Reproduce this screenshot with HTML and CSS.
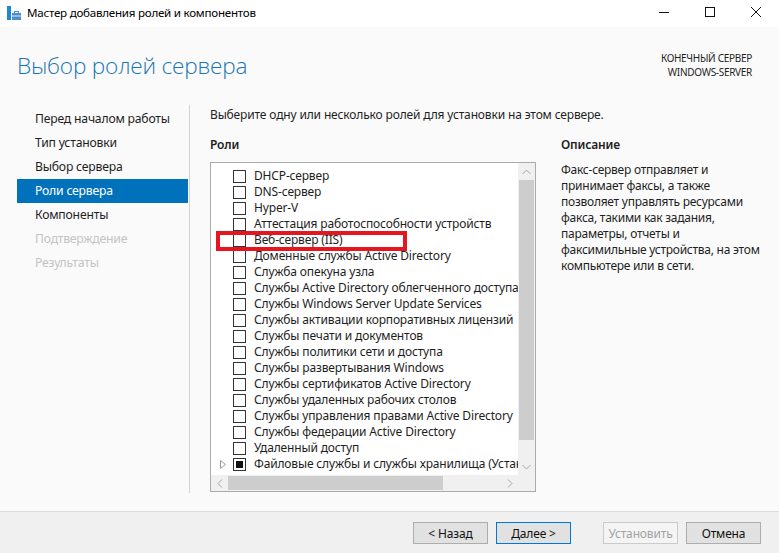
FILE: index.html
```html
<!DOCTYPE html>
<html lang="ru">
<head>
    <meta charset="UTF-8">
    <title>Мастер добавления ролей и компонентов</title>
    <link rel="stylesheet" href="styles.css">
</head>
<body>

    <div class="titlebar">
        <svg class="app-icon" width="16" height="16" viewBox="0 0 16 16">
            <rect x="1" y="1" width="4" height="3" fill="#1e88d6"/>
            <rect x="1" y="4" width="4" height="11" fill="#1e88d6"/>
            <rect x="6" y="8" width="9" height="7" fill="#4a8fc9"/>
            <rect x="8.5" y="6.5" width="4" height="2" fill="none" stroke="#4a8fc9" stroke-width="1"/>
            <rect x="6" y="10.5" width="9" height="1" fill="#d8e8f5"/>
        </svg>
        <span class="window-title">Мастер добавления ролей и компонентов</span>
        <div class="window-controls">
            <span class="ctl">
                <svg width="12" height="12" viewBox="0 0 12 12"><path d="M1 6.5h10" stroke="#111" stroke-width="1"/></svg>
            </span>
            <span class="ctl">
                <svg width="12" height="12" viewBox="0 0 12 12"><rect x="1.5" y="1.5" width="9" height="9" fill="none" stroke="#111" stroke-width="1"/></svg>
            </span>
            <span class="ctl">
                <svg width="12" height="12" viewBox="0 0 12 12"><path d="M1 1l10 10M11 1L1 11" stroke="#111" stroke-width="1"/></svg>
            </span>
        </div>
    </div>

    <div class="header">
        <h1>Выбор ролей сервера</h1>
        <div class="target-server">
            <div>КОНЕЧНЫЙ СЕРВЕР</div>
            <div>WINDOWS-SERVER</div>
        </div>
    </div>

    <div class="main">
        <div class="steps">
            <div class="step">Перед началом работы</div>
            <div class="step">Тип установки</div>
            <div class="step">Выбор сервера</div>
            <div class="step active">Роли сервера</div>
            <div class="step">Компоненты</div>
            <div class="step disabled">Подтверждение</div>
            <div class="step disabled">Результаты</div>
        </div>

        <div class="content">
            <p class="intro">Выберите одну или несколько ролей для установки на этом сервере.</p>
            <div class="columns">
                <div class="roles">
                    <div class="section-title">Роли</div>
                    <div class="listbox">
                        <div class="list">
                            <div class="row"><span class="exp"></span><span class="check"></span>DHCP-сервер</div>
                            <div class="row"><span class="exp"></span><span class="check"></span>DNS-сервер</div>
                            <div class="row"><span class="exp"></span><span class="check"></span>Hyper-V</div>
                            <div class="row"><span class="exp"></span><span class="check"></span>Аттестация работоспособности устройств</div>
                            <div class="row"><span class="exp"></span><span class="check"></span>Веб-сервер (IIS)</div>
                            <div class="row"><span class="exp"></span><span class="check"></span>Доменные службы Active Directory</div>
                            <div class="row"><span class="exp"></span><span class="check"></span>Служба опекуна узла</div>
                            <div class="row"><span class="exp"></span><span class="check"></span>Службы Active Directory облегченного доступа к каталогам</div>
                            <div class="row"><span class="exp"></span><span class="check"></span>Службы Windows Server Update Services</div>
                            <div class="row"><span class="exp"></span><span class="check"></span>Службы активации корпоративных лицензий</div>
                            <div class="row"><span class="exp"></span><span class="check"></span>Службы печати и документов</div>
                            <div class="row"><span class="exp"></span><span class="check"></span>Службы политики сети и доступа</div>
                            <div class="row"><span class="exp"></span><span class="check"></span>Службы развертывания Windows</div>
                            <div class="row"><span class="exp"></span><span class="check"></span>Службы сертификатов Active Directory</div>
                            <div class="row"><span class="exp"></span><span class="check"></span>Службы удаленных рабочих столов</div>
                            <div class="row"><span class="exp"></span><span class="check"></span>Службы управления правами Active Directory</div>
                            <div class="row"><span class="exp"></span><span class="check"></span>Службы федерации Active Directory</div>
                            <div class="row"><span class="exp"></span><span class="check"></span>Удаленный доступ</div>
                            <div class="row">
                                <span class="exp">
                                    <svg width="6" height="9" viewBox="0 0 6 9"><path d="M0.5 0.5v8l5-4z" fill="none" stroke="#9a9a9a" stroke-width="1"/></svg>
                                </span><span class="check partial"></span>Файловые службы и службы хранилища (Установлено 2 из 12)
                            </div>
                        </div>
                        <div class="vscroll">
                            <span class="arrow">
                                <svg width="9" height="6" viewBox="0 0 9 6"><path d="M0.5 5L4.5 1l4 4" fill="none" stroke="#a6a6a6" stroke-width="1"/></svg>
                            </span>
                            <div class="thumb"></div>
                            <span class="arrow">
                                <svg width="9" height="6" viewBox="0 0 9 6"><path d="M0.5 1l4 4 4-4" fill="none" stroke="#a6a6a6" stroke-width="1"/></svg>
                            </span>
                        </div>
                        <div class="hscroll">
                            <span class="arrow">
                                <svg width="6" height="9" viewBox="0 0 6 9"><path d="M5 0.5L1 4.5l4 4" fill="none" stroke="#a6a6a6" stroke-width="1"/></svg>
                            </span>
                            <div class="thumb"></div>
                            <span class="arrow">
                                <svg width="6" height="9" viewBox="0 0 6 9"><path d="M1 0.5l4 4-4 4" fill="none" stroke="#a6a6a6" stroke-width="1"/></svg>
                            </span>
                        </div>
                        <div class="corner"></div>
                        <!-- red frame around the IIS role -->
                        <div class="mark"></div>
                    </div>
                </div>
                <div class="description">
                    <div class="section-title">Описание</div>
                    <p>Факс-сервер отправляет и<br>принимает факсы, а также<br>позволяет управлять ресурсами<br>факса, такими как задания,<br>параметры, отчеты и<br>факсимильные устройства, на этом<br>компьютере или в сети.</p>
                </div>
            </div>
        </div>
    </div>

    <div class="footer">
        <button class="btn">&lt; Назад</button>
        <button class="btn default">Далее &gt;</button>
        <button class="btn wide-gap" disabled>Установить</button>
        <button class="btn">Отмена</button>
    </div>

</body>
</html>
```

FILE: styles.css
```css
html, body {
    margin: 0;
    padding: 0;
}

body {
    width: 779px;
    height: 553px;
    display: flex;
    flex-direction: column;
    font-family: "Noto Sans", "Open Sans", sans-serif;
    font-size: 12px;
    letter-spacing: -0.15px;
    color: #1e1e1e;
    background-color: #fafafa;
    overflow: hidden;
}

/* window caption */

.titlebar {
    height: 27px;
    display: flex;
    align-items: center;
    background-color: #fff;
    padding-left: 6px;
    flex-shrink: 0;
}

.app-icon {
    margin-top: -2px;
}

.window-title {
    margin-left: 5px;
    margin-top: -3px;
    font-size: 11.6px;
    letter-spacing: -0.25px;
    color: #000;
}

.window-controls {
    margin-left: auto;
    display: flex;
    margin-top: -4px;
}

.ctl {
    width: 46px;
    display: flex;
    justify-content: center;
}

/* page header */

.header {
    height: 78px;
    display: flex;
    justify-content: space-between;
    flex-shrink: 0;
}

.header h1 {
    margin: 23px 0 0 17px;
    font-family: "Open Sans", sans-serif;
    font-weight: 300;
    font-size: 22.6px;
    letter-spacing: -0.2px;
    color: #1a77b5;
}

.target-server {
    margin: 24px 27px 0 0;
    font-size: 10px;
    letter-spacing: -0.3px;
    line-height: 14px;
    text-align: right;
    color: #1e1e1e;
}

/* steps + content */

.main {
    height: 388px;
    display: flex;
    flex-shrink: 0;
}

.steps {
    width: 171px;
    margin-left: 17px;
    padding-top: 2px;
    padding-right: 1px;
    border-right: 1px solid #d2d2d2;
    flex-shrink: 0;
}

.step {
    height: 24px;
    line-height: 23px;
    padding-left: 18px;
    font-size: 12.2px;
    letter-spacing: -0.2px;
    color: #1e1e1e;
}

.step.active {
    background-color: #0072bc;
    color: #fff;
}

.step.disabled {
    color: #c4c4c4;
}

.content {
    padding-left: 20px;
    flex: 1;
}

.intro {
    margin: 2px 0 0;
    line-height: 16px;
}

.columns {
    display: flex;
    gap: 25px;
    margin-top: 14px;
}

.section-title {
    font-weight: 600;
    line-height: 16px;
    margin-bottom: 9px;
}

.roles {
    width: 326px;
}

/* role list with scrollbars */

.listbox {
    position: relative;
    height: 328px;
    border: 1px solid #ababab;
    background-color: #fff;
    display: grid;
    grid-template-columns: 1fr 17px;
    grid-template-rows: 1fr 16px;
}

.list {
    overflow: hidden;
    padding-top: 5px;
}

.row {
    height: 16px;
    line-height: 16px;
    display: flex;
    align-items: center;
    white-space: nowrap;
}

.exp {
    width: 22px;
    flex-shrink: 0;
    display: flex;
    justify-content: flex-end;
    box-sizing: border-box;
    padding-left: 8px;
}

.exp svg {
    margin-right: 7px;
}

.check {
    width: 11px;
    height: 11px;
    border: 1px solid #333;
    background-color: #fff;
    margin-right: 8px;
    flex-shrink: 0;
    position: relative;
}

.check.partial::after {
    content: "";
    position: absolute;
    left: 2px;
    top: 2px;
    width: 7px;
    height: 7px;
    background-color: #111;
}

.vscroll {
    background-color: #f0f0f0;
    display: flex;
    flex-direction: column;
}

.vscroll .arrow {
    height: 17px;
    display: flex;
    align-items: center;
    justify-content: center;
}

.vscroll .thumb {
    flex: 1;
    margin: 0 1px 18px;
    background-color: #cdcdcd;
}

.hscroll {
    background-color: #f0f0f0;
    display: flex;
    align-items: stretch;
}

.hscroll .arrow {
    width: 17px;
    display: flex;
    align-items: center;
    justify-content: center;
}

.hscroll .thumb {
    width: 215px;
    margin: 1px 0;
    background-color: #cdcdcd;
}

.hscroll .arrow:last-child {
    margin-left: auto;
}

.corner {
    background-color: #f0f0f0;
}

.mark {
    position: absolute;
    left: 5px;
    top: 68px;
    width: 183px;
    height: 12px;
    border: 4px solid #e5161f;
}

.description {
    flex: 1;
}

.description p {
    margin: 0;
    line-height: 16px;
    letter-spacing: -0.25px;
}

/* bottom buttons */

.footer {
    margin-top: auto;
    height: 42px;
    box-sizing: border-box;
    border-top: 1px solid #dcdcdc;
    background-color: #f0f0f0;
    display: flex;
    align-items: flex-start;
    justify-content: flex-end;
    gap: 8px;
    padding: 10px 18px 0 0;
}

.btn {
    width: 75px;
    height: 22px;
    padding: 0;
    font-family: "Noto Sans", "Open Sans", sans-serif;
    font-size: 12px;
    letter-spacing: -0.15px;
    color: #111;
    background-color: #e1e1e1;
    border: 1px solid #adadad;
}

.btn.default {
    border-color: #0078d7;
}

.btn.wide-gap {
    margin-left: 24px;
}

.btn:disabled {
    color: #a3a3a3;
    background-color: #f4f4f4;
    border-color: #cbcbcb;
}
```
